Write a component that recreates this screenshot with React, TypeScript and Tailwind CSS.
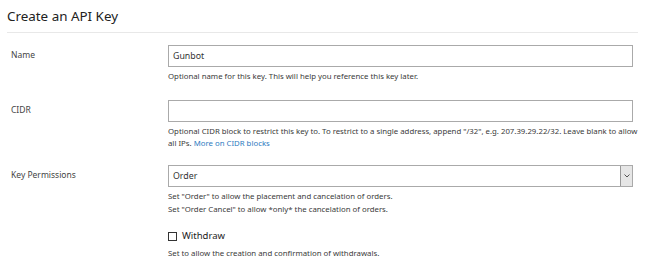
import React from "react";

export default function App() {
  return (
    <div className="w-[645px] h-[268px] bg-white px-[7px] font-['Noto_Sans',sans-serif] text-[#333]">
      <div className="h-[33px] pt-[6px] text-[13.4px] leading-[20px] text-[#222] border-b border-[#e8e8e8]">
        Create an API Key
      </div>
      <div className="grid grid-cols-[161px_465px] mt-[12px]">
        <div className="pl-[4px] pt-[3px] text-[8.5px] leading-[14px] text-[#444]">Name</div>
        <div>
          <div className="h-[22px] border border-[#aaa] px-[4px] text-[8.8px] leading-[20px] text-[#333]">Gunbot</div>
          <div className="mt-[3px] text-[7.8px] leading-[12px] text-[#3a3a3a]">
            Optional name for this key. This will help you reference this key later.
          </div>
        </div>

        <div className="pl-[4px] pt-[3px] mt-[18px] text-[8.5px] leading-[14px] text-[#444]">CIDR</div>
        <div className="mt-[18px]">
          <div className="h-[22px] border border-[#aaa]"></div>
          <div className="mt-[3px] w-[474px] text-[7.8px] leading-[12px] text-[#3a3a3a]">
            Optional CIDR block to restrict this key to. To restrict to a single address, append "/32", e.g. 207.39.29.22/32. Leave blank to allow all IPs.{" "}
            <span className="text-[#2f7bbf]">More on CIDR blocks</span>
          </div>
        </div>

        <div className="pl-[4px] pt-[3px] mt-[16px] text-[8.5px] leading-[14px] text-[#444]">Key Permissions</div>
        <div className="mt-[16px]">
          <div className="h-[22px] border border-[#aaa] flex">
            <div className="flex-1 px-[4px] text-[8.8px] leading-[20px] text-[#333]">Order</div>
            <div className="w-[12px] bg-[#e6e6e6] border-l border-[#999] flex items-center justify-center">
              <svg width="6" height="4" viewBox="0 0 6 4">
                <path d="M0.5 0.5 L3 3 L5.5 0.5" fill="none" stroke="#555" strokeWidth="1" />
              </svg>
            </div>
          </div>
          <div className="mt-[3px] text-[7.8px] leading-[12.5px] text-[#3a3a3a]">
            <div>Set "Order" to allow the placement and cancelation of orders.</div>
            <div>Set "Order Cancel" to allow *only* the cancelation of orders.</div>
          </div>
          <div className="mt-[15px] flex items-center gap-[5px]">
            <div className="w-[9px] h-[9px] border border-[#333] bg-white"></div>
            <div className="text-[9.5px] leading-[12px] text-[#222]">Withdraw</div>
          </div>
          <div className="mt-[5px] text-[7.8px] leading-[12px] text-[#3a3a3a]">
            Set to allow the creation and confirmation of withdrawals.
          </div>
        </div>
      </div>
    </div>
  );
}
